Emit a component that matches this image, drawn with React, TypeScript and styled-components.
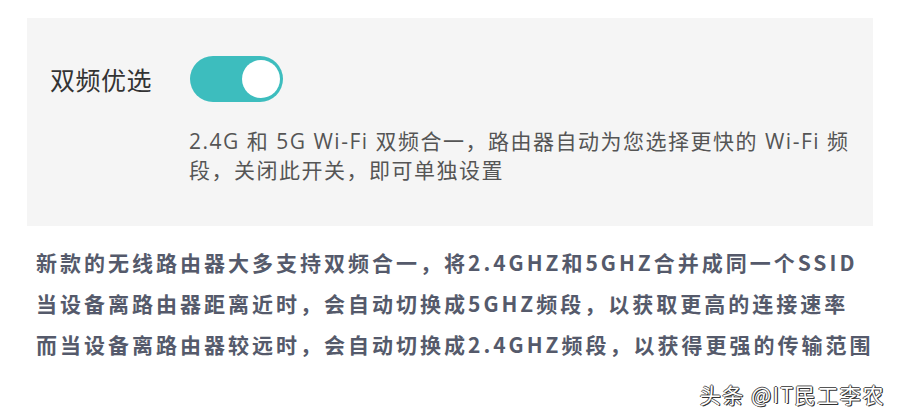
import React from 'react';
import styled, { createGlobalStyle } from 'styled-components';

const GlobalStyle = createGlobalStyle`
	body {
		margin: 0;
		background: #ffffff;
		font-family: 'Noto Sans CJK SC', 'Noto Sans', sans-serif;
	}
`;

const Page = styled.div`
	width: 900px;
	height: 420px;
	padding-top: 18px;
	box-sizing: border-box;
	overflow: hidden;
`;

const Panel = styled.section`
	margin-left: 27px;
	width: 846px;
	height: 208px;
	background: #f5f5f5;
	box-sizing: border-box;
	padding: 38px 0 0 23px;
`;

const SettingRow = styled.div`
	display: flex;
	align-items: center;
	gap: 38px;
`;

const Label = styled.span`
	font-size: 25px;
	letter-spacing: 0.5px;
	color: #333333;
	line-height: 46px;
	font-weight: 400;
`;

const Switch = styled.div<{ $on: boolean }>`
	width: 93px;
	height: 46px;
	border-radius: 23px;
	background: ${(p) => (p.$on ? '#3dbdbe' : '#cccccc')};
	display: flex;
	align-items: center;
	justify-content: ${(p) => (p.$on ? 'flex-end' : 'flex-start')};
	padding: 0 3px 0 4px;
	box-sizing: border-box;
`;

const Knob = styled.div`
	width: 38px;
	height: 38px;
	border-radius: 50%;
	background: #ffffff;
`;

const Hint = styled.p`
	margin: 25px 0 0 139px;
	width: 676px;
	font-family: 'Open Sans', 'Noto Sans CJK SC', sans-serif;
	font-size: 21px;
	letter-spacing: 1.5px;
	line-height: 29px;
	color: #555555;
	font-weight: 400;
`;

const Notes = styled.div`
	padding: 16px 0 0 36px;
	display: flex;
	flex-direction: column;
`;

const NoteLine = styled.div`
	font-size: 21px;
	font-weight: 700;
	letter-spacing: 3px;
	line-height: 41px;
	color: #555a6b;
	white-space: nowrap;
`;

const Watermark = styled.div`
	text-align: right;
	padding-right: 15px;
	margin-top: 14px;
	font-size: 21px;
	letter-spacing: 1.6px;
	color: #ffffff;
	text-shadow: 1px 1px 0 #333, -1px 0 0 #555, 0 -1px 0 #555, 1px 0 0 #333;
`;

const notes = [
	'新款的无线路由器大多支持双频合一，将2.4GHZ和5GHZ合并成同一个SSID',
	'当设备离路由器距离近时，会自动切换成5GHZ频段，以获取更高的连接速率',
	'而当设备离路由器较远时，会自动切换成2.4GHZ频段，以获得更强的传输范围',
];

const App = (): JSX.Element => {
	return (
		<Page>
			<GlobalStyle />
			<Panel>
				<SettingRow>
					<Label>双频优选</Label>
					<Switch $on>
						<Knob />
					</Switch>
				</SettingRow>
				<Hint>
					2.4G 和 5G Wi-Fi 双频合一，路由器自动为您选择更快的 Wi-Fi 频段，关闭此开关，即可单独设置
				</Hint>
			</Panel>
			<Notes>
				{notes.map((n) => (
					<NoteLine key={n}>{n}</NoteLine>
				))}
			</Notes>
			<Watermark>头条 @IT民工李农</Watermark>
		</Page>
	);
};

export default App;
